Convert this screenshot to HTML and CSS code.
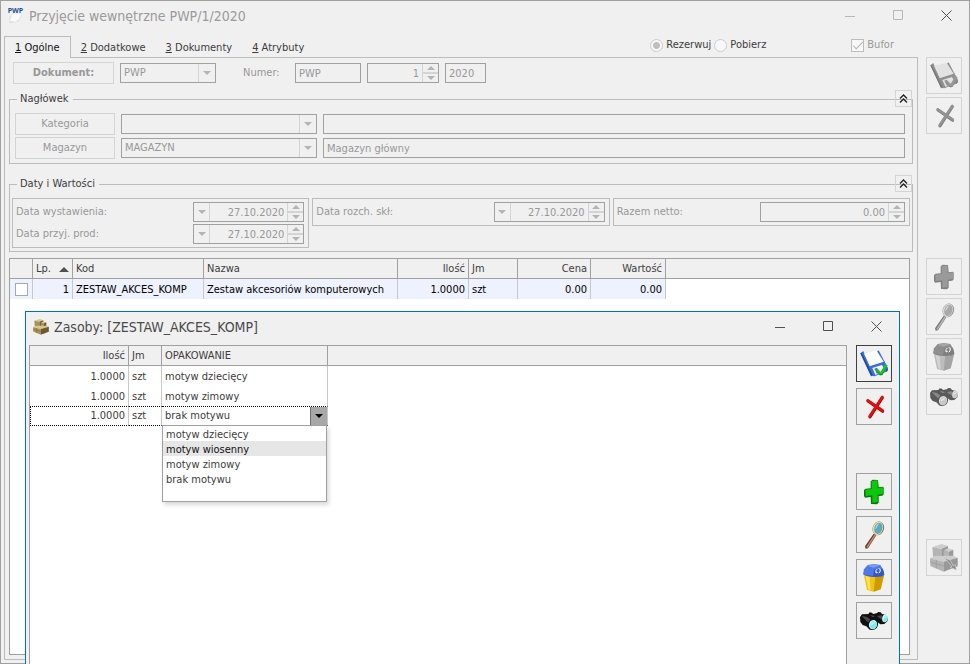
FILE: index.html
```
<!DOCTYPE html>
<html lang="pl">
<head>
<meta charset="utf-8">
<title>Przyjęcie wewnętrzne PWP/1/2020</title>
<link rel="stylesheet" href="styles.css">
</head>
<body>
<svg class="sprite" aria-hidden="true">
  <symbol id="i-save" viewBox="0 0 84 84">
    <path class="c-main" d="M1 10l9-7 19 44 44-13 11 22-5 9-36 14-5-1-5 1z"/>
    <path class="c-main" d="M50 5l6-4 28 54-6 8z"/>
    <path class="c-dark" d="M1 10l32 67 5-2L5 9zM78 61l6-6-1 7-4 4z"/>
    <path class="c-paper" d="M12 11l38-9 21 33-41 13z"/>
    <path class="c-paper" d="M37 54l29-9 7 12-10 13-17 4z"/>
    <path class="c-main" d="M43 56l8-3 7 14-7 5z"/>
    <path class="c-check" d="M46 59l7-3 9 9 14-23 7 4-16 29-7 1z"/>
    <path class="c-checkdark" d="M46 59l15 14 5 0 17-27-16 29-7 1z"/>
  </symbol>
  <symbol id="i-delete" viewBox="0 0 84 84">
    <path class="s-reddark" d="M24 24l44 31M67 14L30 72"/>
    <path class="s-red" d="M23 22l45 31M67 12L29 70"/>
  </symbol>
  <symbol id="i-add" viewBox="0 0 84 84">
    <path class="c-greendark" d="M12 36l5-4 15-1V10l6-5 16 1 2 22 13-2 2 3v20l-4 4-11 1v20l-5 5-18-1-1-21-17 2-3-5z"/>
    <path class="c-green" d="M16 35l19-2V9l18-2v24l17-3v19l-17 3v22l-16 2V52l-20 2z"/>
  </symbol>
  <symbol id="i-zoom" viewBox="0 0 84 84">
    <path class="c-wooddark" d="M15 76l26-38 8 5-25 39-7 1z"/>
    <path class="c-wood" d="M19 78l25-38 4 2-25 38z"/>
    <ellipse class="c-rimdark" cx="55" cy="22" rx="17" ry="21" transform="rotate(17 55 22)"/>
    <ellipse class="c-rim" cx="54" cy="22" rx="15" ry="20" transform="rotate(17 54 22)"/>
    <ellipse class="c-lens" cx="55" cy="22" rx="12" ry="17" transform="rotate(17 55 22)"/>
    <path class="c-glow" d="M46 25c0-9 6-17 12-18-5 6-7 15-12 18z"/>
  </symbol>
  <symbol id="i-trash" viewBox="0 0 84 84">
    <path class="c-bin" d="M11 30l62 2-11 44-21 7-20-5z"/>
    <path class="c-binlight" d="M17 36l8 40 7 3-3-41z"/>
    <path class="c-bindark" d="M46 36l26-3-10 43-21 7z"/>
    <path class="c-lid" d="M9 31l3-15L23 3l18-3 20 3 9 15 3 14-6 5-23 2-23-3z"/>
    <path class="c-liddark" d="M9 30l12 4 18 2 3-19 26-3 5 17-6 6-23 2-23-3z"/>
    <path class="c-lidtop" d="M22 6L41 1l19 3-19 7z"/>
    <path class="c-mark" d="M52 15l-4 4v8l5-2M56 14l5 2-1 8-4 3"/>
  </symbol>
  <symbol id="i-find" viewBox="0 0 84 84">
    <path class="c-black" d="M0 30l6-8 19-1 4-5 7 1 3 4 11-2 5-4 7 1 4 5 12 2 6 9-2 11-9 8-12 1-8-6-6 3-1 12-7 7-10 0-10-10-11-4-7-9z"/>
    <path class="c-sheen" d="M5 27l14 2 12 8-4 11-5-4zM30 24l16 3-8 4zM50 27l14-2 8 4-5 10z"/>
    <ellipse class="c-black" cx="39" cy="52" rx="15" ry="17" transform="rotate(20 39 52)"/>
    <ellipse class="c-glassrim" cx="39" cy="53" rx="12" ry="14" transform="rotate(20 39 53)"/>
    <ellipse class="c-glass" cx="40" cy="54" rx="10" ry="12" transform="rotate(20 40 54)"/>
    <ellipse class="c-glassrim" cx="75" cy="34" rx="8" ry="12" transform="rotate(15 75 34)"/>
    <ellipse class="c-glass" cx="76" cy="35" rx="6" ry="10" transform="rotate(15 76 35)"/>
    <path class="c-glow" d="M33 50l12-7-1 5-11 8zM71 31l9-4-1 4-9 5z"/>
  </symbol>
  <symbol id="i-boxes" viewBox="0 0 84 84">
    <path class="b-light" d="M7 9L35 0l19 6-20 9z"/>
    <path class="b-mid" d="M7 9l27 6v29L9 38z"/>
    <path class="b-dark" d="M34 15L54 6v27L34 44z"/>
    <path class="b-light" d="M41 19l13-6 16 4-13 6z"/>
    <path class="b-mid" d="M41 19l16 4v17l-16-3z"/>
    <path class="b-dark" d="M57 23l13-6v21l-13 7z"/>
    <path class="b-light" d="M0 43l13-7 56-1 14 6-42 12z"/>
    <path class="b-mid" d="M0 43l41 10v30L1 66z"/>
    <path class="b-dark" d="M41 53l42-12v26L41 83z"/>
    <path class="b-line" d="M19 48v25M1 54l40 12M60 48v27M41 66l42-13"/>
  </symbol>
  <symbol id="i-collapse" viewBox="0 0 9 9"><path d="M1 4.500L4.500 1 8 4.500M1 8.500L4.500 5 8 8.500"/></symbol>
</svg>

<main class="window">
  <header class="titlebar">
    <svg class="app-icon" viewBox="0 0 48 48" aria-hidden="true">
      <path class="doc-back" d="M4 26l38-8-10 22-26 6z"/>
      <path class="doc-page" d="M12 18l30-2-8 18-10 8-20-2z"/>
      <text x="-1" y="15">PWP</text>
    </svg>
    <h1>Przyjęcie wewnętrzne PWP/1/2020</h1>
    <div class="controls">
      <button type="button" aria-label="Minimalizuj" disabled><svg viewBox="0 0 11 11"><path d="M0 6.500h10"/></svg></button>
      <button type="button" aria-label="Maksymalizuj" disabled><svg viewBox="0 0 11 11"><path d="M.5.5h9v9h-9z"/></svg></button>
      <button type="button" aria-label="Zamknij"><svg viewBox="0 0 11 11"><path d="M.5.5l10 10M10.500.5l-10 10"/></svg></button>
    </div>
  </header>

  <div class="strip">
    <nav class="tabs" role="tablist">
      <button type="button" role="tab" class="tab active" aria-selected="true"><u>1</u> Ogólne</button>
      <button type="button" role="tab" class="tab"><u>2</u> Dodatkowe</button>
      <button type="button" role="tab" class="tab"><u>3</u> Dokumenty</button>
      <button type="button" role="tab" class="tab"><u>4</u> Atrybuty</button>
    </nav>
    <div class="options">
      <label class="radio"><input type="radio" name="mode" checked disabled>Rezerwuj</label>
      <label class="radio"><input type="radio" name="mode" disabled>Pobierz</label>
      <label class="check"><input type="checkbox" checked disabled>Bufor</label>
    </div>
  </div>

  <div class="workspace">
    <section class="panel">
      <div class="doc-row">
        <button type="button" class="btn strong" disabled>Dokument:</button>
        <div class="field combo doc-type"><select aria-label="Dokument" disabled><option>PWP</option></select><span class="drop"></span></div>
        <label class="doc-label" for="symbol">Numer:</label>
        <input class="field doc-symbol" id="symbol" type="text" value="PWP" disabled>
        <div class="field spin doc-number"><input type="text" aria-label="Numer kolejny" value="1" disabled><span class="arrows"></span></div>
        <input class="field doc-year" type="text" aria-label="Rok" value="2020" disabled>
      </div>

      <div class="group">
        <fieldset>
          <legend>Nagłówek</legend>
          <div class="header-rows">
            <button type="button" class="btn" disabled>Kategoria</button>
            <div class="field combo"><select aria-label="Kategoria" disabled><option></option></select><span class="drop"></span></div>
            <input class="field" type="text" aria-label="Opis kategorii" disabled>
            <button type="button" class="btn" disabled>Magazyn</button>
            <div class="field combo"><select aria-label="Magazyn" disabled><option>MAGAZYN</option></select><span class="drop"></span></div>
            <input class="field" type="text" aria-label="Nazwa magazynu" value="Magazyn główny" disabled>
          </div>
        </fieldset>
        <button type="button" class="collapse" aria-label="Zwiń"><svg><use href="#i-collapse"/></svg></button>
      </div>

      <div class="group">
        <fieldset>
          <legend>Daty i Wartości</legend>
          <div class="boxes">
            <div class="box">
              <div class="line"><label for="d1">Data wystawienia:</label><div class="field spin date"><span class="drop left"></span><input id="d1" type="text" value="27.10.2020" disabled><span class="arrows"></span></div></div>
              <div class="line"><label for="d2">Data przyj. prod:</label><div class="field spin date"><span class="drop left"></span><input id="d2" type="text" value="27.10.2020" disabled><span class="arrows"></span></div></div>
            </div>
            <div class="box">
              <div class="line"><label for="d3">Data rozch. skł:</label><div class="field spin date"><span class="drop left"></span><input id="d3" type="text" value="27.10.2020" disabled><span class="arrows"></span></div></div>
            </div>
            <div class="box">
              <div class="line"><label for="sum">Razem netto:</label><div class="field spin amount"><input id="sum" type="text" value="0.00" disabled><span class="arrows"></span></div></div>
            </div>
          </div>
        </fieldset>
        <button type="button" class="collapse" aria-label="Zwiń"><svg><use href="#i-collapse"/></svg></button>
      </div>

      <div class="grid items">
        <table>
          <colgroup><col class="w-check"><col class="w-lp"><col class="w-code"><col class="w-name"><col class="w-qty"><col class="w-unit"><col class="w-price"><col class="w-value"><col></colgroup>
          <thead>
            <tr><th></th><th class="sorted">Lp.</th><th>Kod</th><th>Nazwa</th><th class="num">Ilość</th><th>Jm</th><th class="num">Cena</th><th class="num">Wartość</th><th></th></tr>
          </thead>
          <tbody>
            <tr><td class="tick"><input type="checkbox" aria-label="Zaznacz pozycję 1"></td><td class="num">1</td><td>ZESTAW_AKCES_KOMP</td><td>Zestaw akcesoriów komputerowych</td><td class="num">1.0000</td><td>szt</td><td class="num">0.00</td><td class="num">0.00</td></tr>
          </tbody>
        </table>
      </div>
    </section>

    <aside class="tools muted">
      <div class="tool-group">
        <button type="button" class="tool" aria-label="Zapisz" disabled><svg><use href="#i-save"/></svg></button>
        <button type="button" class="tool" aria-label="Anuluj" disabled><svg><use href="#i-delete"/></svg></button>
      </div>
      <div class="tool-group">
        <button type="button" class="tool" aria-label="Dodaj" disabled><svg><use href="#i-add"/></svg></button>
        <button type="button" class="tool" aria-label="Podgląd" disabled><svg><use href="#i-zoom"/></svg></button>
        <button type="button" class="tool" aria-label="Usuń" disabled><svg><use href="#i-trash"/></svg></button>
        <button type="button" class="tool" aria-label="Szukaj" disabled><svg><use href="#i-find"/></svg></button>
      </div>
      <div class="tool-group">
        <button type="button" class="tool" aria-label="Zasoby" disabled><svg viewBox="0 0 84 84"><use href="#i-boxes"/><path class="b-arrow" d="M38 40l22 8 10 18 6-4 3 16-18-8 5-2-12-16z"/></svg></button>
      </div>
    </aside>
  </div>
</main>

<section class="dialog" role="dialog" aria-labelledby="dialog-title">
  <header class="titlebar">
    <svg class="app-icon box-icon" aria-hidden="true"><use href="#i-boxes"/></svg>
    <h2 id="dialog-title">Zasoby: [ZESTAW_AKCES_KOMP]</h2>
    <div class="controls">
      <button type="button" aria-label="Minimalizuj"><svg viewBox="0 0 11 11"><path d="M0 6.500h10"/></svg></button>
      <button type="button" aria-label="Maksymalizuj"><svg viewBox="0 0 11 11"><path d="M.5.5h9v9h-9z"/></svg></button>
      <button type="button" aria-label="Zamknij"><svg viewBox="0 0 11 11"><path d="M.5.5l10 10M10.500.5l-10 10"/></svg></button>
    </div>
  </header>
  <div class="dialog-body">
    <div class="grid stock">
      <table>
        <colgroup><col class="w-stock-qty"><col class="w-stock-unit"><col class="w-pack"><col></colgroup>
        <thead><tr><th class="num">Ilość</th><th>Jm</th><th>OPAKOWANIE</th><th></th></tr></thead>
        <tbody>
          <tr><td class="num">1.0000</td><td>szt</td><td>motyw dziecięcy</td></tr>
          <tr><td class="num">1.0000</td><td>szt</td><td>motyw zimowy</td></tr>
          <tr class="focused"><td class="num">1.0000</td><td>szt</td>
            <td class="editor">
              <div class="combo"><select aria-label="Opakowanie"><option>motyw dziecięcy</option><option>motyw wiosenny</option><option>motyw zimowy</option><option selected>brak motywu</option></select><span class="drop"></span></div>
              <ul class="list" role="listbox">
                <li role="option">motyw dziecięcy</li>
                <li role="option" class="hover">motyw wiosenny</li>
                <li role="option">motyw zimowy</li>
                <li role="option">brak motywu</li>
              </ul>
            </td></tr>
        </tbody>
      </table>
    </div>
    <aside class="tools">
      <div class="tool-group">
        <button type="button" class="tool default" aria-label="Zapisz"><svg><use href="#i-save"/></svg></button>
        <button type="button" class="tool" aria-label="Anuluj"><svg><use href="#i-delete"/></svg></button>
      </div>
      <div class="tool-group">
        <button type="button" class="tool" aria-label="Dodaj"><svg><use href="#i-add"/></svg></button>
        <button type="button" class="tool" aria-label="Podgląd"><svg><use href="#i-zoom"/></svg></button>
        <button type="button" class="tool" aria-label="Usuń"><svg><use href="#i-trash"/></svg></button>
        <button type="button" class="tool" aria-label="Szukaj"><svg><use href="#i-find"/></svg></button>
      </div>
    </aside>
  </div>
</section>
</body>
</html>
```
FILE: styles.css
```
:root {
  --face: #f0f0f0;
  --edge: #a0a0a0;
  --soft: #bcbcbc;
  --faint: #d4d4d4;
  --text: #3c3c3c;
  --off: #989898;
  --main: #3a6fe0;
  --main-dark: #1f47a8;
  --paper: #ffffff;
  --check: #1fc41f;
  --check-dark: #0b7d0b;
  --red: #e80c0c;
  --red-dark: #9a0505;
  --green: #0cc80c;
  --green-dark: #067a06;
  --wood: #c08a78;
  --wood-dark: #6d3a2c;
  --rim: #f2dfa0;
  --rim-dark: #8a7440;
  --lens: #5aa9c4;
  --bin: #f2c410;
  --bin-light: #ffe25a;
  --bin-dark: #cf9c00;
  --lid: #4f78e8;
  --lid-dark: #3157cc;
  --lid-top: #7b9df5;
  --black: #101010;
  --sheen: #484848;
  --glass: #7fe8ee;
  --glass-rim: #d8ffff;
}

* { box-sizing: border-box; }

body, button, input, select {
  font-family: "DejaVu Sans Condensed", "Noto Sans", sans-serif;
  font-size: 11px;
  line-height: 14px;
  color: var(--text);
}

body { margin: 0; height: 100vh; overflow: hidden; background: var(--face); position: relative; }
button, input, select { margin: 0; padding: 0; border: 0; border-radius: 0; background: none; appearance: none; opacity: 1; }
button { cursor: default; }
.sprite { display: none; }

.window { display: flex; flex-direction: column; height: 100%; border: 1px solid var(--edge); padding: 0 7px 3px 3px; }

.titlebar { display: flex; align-items: center; height: 32px; flex: none; }
.titlebar h1, .titlebar h2 { margin: 0; font-size: 14px; line-height: 20px; font-weight: normal; color: #4a4a4a; }
.window .titlebar h1 { color: #9a9a9a; }
.window > .titlebar { height: 35px; padding: 0 4px 6px; }
.app-icon { width: 16px; height: 16px; margin-right: 5px; flex: none; overflow: visible; }
.app-icon text { font: bold 21px "Open Sans", sans-serif; fill: #1c4f8f; }
.doc-back { fill: #dcdcdc; }
.doc-page { fill: #fafafa; stroke: #d0d0d0; }

.controls { display: flex; gap: 37px; margin-left: auto; }
.controls button { width: 11px; height: 11px; }
.controls svg { display: block; width: 11px; height: 11px; fill: none; stroke: #505050; }
.controls button:disabled svg { stroke: #b8b8b8; }
.window > .titlebar .controls { margin-right: 6px; }

.strip { display: flex; justify-content: space-between; margin-bottom: -1px; flex: none; position: relative; }
.tabs { display: flex; }
.tab { height: 22px; padding: 0 9px; border: 1px solid transparent; border-bottom: 0; }
.tab.active { padding: 0 10px; background: var(--face); border-color: var(--soft); color: #111; }
.options { display: flex; align-items: center; height: 18px; padding-right: 68px; }
.options label { display: flex; align-items: center; gap: 3px; margin-right: 3px; }
.options input { width: 13px; height: 13px; border: 1px solid #cccccc; background: #f8f8f8; }
.radio input { border-radius: 50%; }
.radio input:checked { background: radial-gradient(circle, #bfbfbf 0 3px, #f8f8f8 4px); }
.options .check { margin: 0 0 0 82px; color: var(--off); }
.check input { border-color: #bdbdbd; display: grid; place-items: center; }
.check input:checked::before { content: ""; width: 9px; height: 4px; border: solid #b4b4b4; border-width: 0 0 1px 1px; transform: rotate(-45deg) translate(1px, -1px); }

.workspace { display: flex; flex: 1; gap: 8px; min-height: 0; }
.panel { flex: 1; min-width: 0; display: flex; flex-direction: column; border: 1px solid var(--soft); padding: 4px; }

.btn { height: 22px; border: 1px solid var(--faint); color: var(--off); text-align: center; }
.strong { font-weight: bold; }

.field { height: 20px; border: 1px solid var(--edge); padding: 0 3px; color: var(--off); min-width: 0; }
.field input, .field select { color: var(--off); min-width: 0; width: 100%; height: 100%; }
.combo { display: grid; grid-template-columns: 1fr 17px; padding: 0; }
.combo select { grid-area: 1 / 1 / 2 / 3; padding-left: 3px; }
.combo .drop { grid-area: 1 / 2; pointer-events: none; }
.drop { display: grid; place-items: center; width: 17px; border-left: 1px solid var(--faint); }
.drop.left { width: 16px; flex: none; border-left: 0; border-right: 1px solid var(--faint); }
.drop::after { content: ""; border: 4px solid transparent; border-top-color: #b4b4b4; border-bottom: 0; }
.spin { display: flex; padding: 0; }
.spin input { flex: 1; text-align: right; padding-right: 3px; }
.arrows { flex: none; width: 16px; display: grid; grid-template-rows: 1fr 2px 1fr; place-items: center; border-left: 1px solid var(--faint); background: linear-gradient(var(--faint), var(--faint)) center / 100% 2px no-repeat; }
.arrows::before, .arrows::after { content: ""; border: 4px solid transparent; }
.arrows::before { grid-row: 1; border-bottom-color: #b4b4b4; border-top: 0; }
.arrows::after { grid-row: 3; border-top-color: #b4b4b4; border-bottom: 0; }

.doc-row { display: flex; align-items: center; margin: 0 4px 7px; }
.doc-row .btn { width: 101px; }
.doc-type { width: 96px; margin-left: 6px; }
.doc-label { width: 52px; margin-left: 27px; color: var(--off); }
.doc-symbol { width: 66px; }
.doc-number { width: 72px; margin: 0 6px; }
.doc-year { width: 41px; }

.group { position: relative; margin-bottom: 12px; }
.group + .group { margin-bottom: 6px; }
fieldset { margin: 0; padding: 0; border: 1px solid var(--soft); min-width: 0; }
legend { height: 16px; line-height: 15px; margin-left: 7px; padding: 0 4px 0 3px; }
.collapse { position: absolute; top: -1px; right: 1px; width: 17px; height: 17px; border: 1px solid var(--faint); display: grid; place-items: center; }
.collapse svg { width: 9px; height: 9px; fill: none; stroke: #202020; stroke-width: 1.3; }

.header-rows { display: grid; grid-template-columns: 100px 196px 1fr; gap: 2px 6px; align-items: center; padding: 6px 7px 4px 5px; }
.boxes { display: grid; grid-template-columns: repeat(3, 1fr); gap: 3px; align-items: start; padding: 6px 2px 3px; }
.box { display: grid; gap: 2px; border: 1px solid var(--soft); padding: 3px 4px 3px 3px; }
.line { display: flex; align-items: center; justify-content: space-between; color: var(--off); }
.date { width: 111px; }
.amount { width: 145px; }

.grid { background: #fff; border: 1px solid var(--edge); }
.items { flex: 1; margin-right: 3px; }
table { width: 100%; table-layout: fixed; border-collapse: separate; border-spacing: 0; }
th, td { height: 20px; padding: 0 3px; text-align: left; font-weight: normal; white-space: nowrap; border-right: 1px solid #c8c8c8; }
td { padding-top: 2px; }
th { background: var(--face); border-right-color: var(--edge); border-bottom: 1px solid var(--edge); }
th:last-child { border-right: 0; }
.num { text-align: right; }
.items td { background: #eef2ff; color: #000; }
.sorted::after { content: ""; display: inline-block; margin-left: 8px; border: 5px solid transparent; border-top: 0; border-bottom-color: #505050; }
.items .tick { padding-top: 0; }
.tick input { display: block; width: 13px; height: 13px; margin: 0 auto; border: 1px solid #a8a8a8; background: #fff; }
.w-check { width: 23px; }
.w-lp { width: 40px; }
.w-code { width: 131px; }
.w-name { width: 194px; }
.w-qty { width: 71px; }
.w-unit { width: 49px; }
.w-price { width: 73px; }
.w-value { width: 75px; }
.w-stock-qty { width: 99px; }
.w-stock-unit { width: 33px; }
.w-pack { width: 166px; }

.tools { flex: none; display: flex; flex-direction: column; gap: 124px; }
.tool-group { display: flex; flex-direction: column; gap: 3px; }
.tool { width: 36px; height: 37px; border: 1px solid var(--edge); display: grid; place-items: center; }
.tool svg { display: block; width: 28px; height: 28px; }
.tool.default { border-color: #404040; }
.muted .tool { border-color: var(--faint); }

.dialog { position: absolute; left: 25px; right: 70px; top: 311px; bottom: 0; display: flex; flex-direction: column; background: var(--face); border: 1px solid #0072bc; border-bottom: 0; padding: 0 7px 0 3px; overflow: hidden; }
.dialog .titlebar { height: 33px; padding: 0 10px 4px 4px; }
.dialog-body { flex: 1; min-height: 0; display: flex; gap: 9px; }
.dialog .tools { gap: 48px; }
.dialog .tool-group { gap: 6px; }
.stock { flex: 1; min-width: 0; border-bottom: 0; }

.focused td { padding-top: 0; border-top: 1px dotted #000; border-bottom: 1px dotted #000; }
.focused td:first-child { border-left: 1px dotted #000; }
.focused .editor { position: relative; padding: 0; }
.editor .combo { height: 18px; }
.editor .drop { background: #a8a8a8; border-left-color: #707070; }
.editor .drop::after { border-top-color: #000; }
.list { position: absolute; top: 100%; left: 0; right: 0; height: 77px; margin: 0; padding: 0; list-style: none; background: #fff; border: 1px solid var(--edge); box-shadow: 2px 3px 4px rgba(0, 0, 0, .15); }
.list li { height: 15px; line-height: 17px; padding-left: 3px; }
.list .hover { background: #e6e6e6; color: #111; }

.muted {
  --main: #909090;
  --main-dark: #7a7a7a;
  --paper: #e2e2e2;
  --check: #999999;
  --check-dark: #828282;
  --red: #929292;
  --red-dark: #7a7a7a;
  --green: #9a9a9a;
  --green-dark: #808080;
  --wood: #b4b4b4;
  --wood-dark: #7c7c7c;
  --rim: #d8d8d8;
  --rim-dark: #929292;
  --lens: #a8a8a8;
  --bin: #bcbcbc;
  --bin-light: #d2d2d2;
  --bin-dark: #a4a4a4;
  --lid: #8e8e8e;
  --lid-dark: #7e7e7e;
  --lid-top: #a6a6a6;
  --black: #5a5a5a;
  --sheen: #888888;
  --glass: #c8c8c8;
  --glass-rim: #dedede;
  --box-light: #cdcdcd;
  --box-mid: #b4b4b4;
  --box-dark: #999999;
}

.box-icon { --box-light: #d8c48c; --box-mid: #a8925c; --box-dark: #6e5a30; }
.c-main { fill: var(--main); }
.c-dark { fill: var(--main-dark); }
.c-paper { fill: var(--paper); }
.c-check { fill: var(--check); }
.c-checkdark { fill: var(--check-dark); }
.s-red, .s-reddark { fill: none; stroke: var(--red); stroke-width: 8; stroke-linecap: round; }
.s-reddark { stroke: var(--red-dark); stroke-width: 9; }
.c-green { fill: var(--green); }
.c-greendark { fill: var(--green-dark); }
.c-wood { fill: var(--wood); }
.c-wooddark { fill: var(--wood-dark); }
.c-rim { fill: var(--rim); }
.c-rimdark { fill: var(--rim-dark); }
.c-lens { fill: var(--lens); }
.c-glow { fill: #fff; fill-opacity: .5; }
.c-bin { fill: var(--bin); }
.c-binlight { fill: var(--bin-light); }
.c-bindark { fill: var(--bin-dark); }
.c-lid { fill: var(--lid); }
.c-liddark { fill: var(--lid-dark); }
.c-lidtop { fill: var(--lid-top); }
.c-mark { fill: none; stroke: #fff; stroke-width: 3; }
.c-black { fill: var(--black); }
.c-sheen { fill: var(--sheen); }
.c-glass { fill: var(--glass); }
.c-glassrim { fill: var(--glass-rim); }
.b-light { fill: var(--box-light); }
.b-mid { fill: var(--box-mid); }
.b-dark { fill: var(--box-dark); }
.b-line { fill: none; stroke: var(--box-dark); stroke-width: 2; }
.b-arrow { fill: #8a8a8a; stroke: #d8d8d8; stroke-width: 2; }
```
